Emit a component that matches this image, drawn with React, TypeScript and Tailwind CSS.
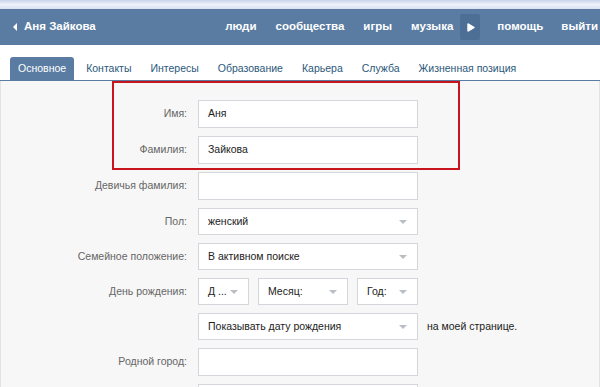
import { Play } from "lucide-react";

const nav = ["люди", "сообщества", "игры", "музыка"];
const tabs = ["Контакты", "Интересы", "Образование", "Карьера", "Служба", "Жизненная позиция"];

const Arrow = () => (
  <span className="shrink-0 w-0 h-0 border-l-[4px] border-r-[4px] border-t-[4px] border-l-transparent border-r-transparent border-t-[#b9bec4]"></span>
);

const Field = ({ value = "" }: { value?: string }) => (
  <div className="w-[220px] h-[28px] bg-white border border-[#d3d7dc] flex items-center px-[9px] text-[#222]">
    {value}
  </div>
);

const Select = ({ value, w = "w-[220px]" }: { value: string; w?: string }) => (
  <div className={`${w} h-[27px] bg-white border border-[#d3d7dc] flex items-center justify-between pl-[9px] pr-[10px] text-[#222] whitespace-nowrap`}>
    <span>{value}</span>
    <Arrow />
  </div>
);

const Row = ({ label, children }: { label: string; children: React.ReactNode }) => (
  <div className="flex items-center h-[28px]">
    <div className="w-[187px] text-right pr-[1px] text-[#666]">{label}</div>
    <div className="ml-[10px] flex items-center">{children}</div>
  </div>
);

const App = () => {
  return (
    <div className="w-[600px] h-[387px] overflow-hidden bg-white text-[10.5px]" style={{ fontFamily: '"Liberation Sans", Arial, sans-serif' }}>
      {/* browser-ish top strip */}
      <div className="h-[9px] bg-gradient-to-b from-[#c9d3ea] via-[#eef2fb] to-[#d9e0ef]"></div>

      {/* header */}
      <div className="h-[36px] bg-[#5a7ca2] flex items-center text-white font-bold text-[11.5px]">
        <span className="ml-[13px] w-0 h-0 border-t-[4px] border-b-[4px] border-r-[4px] border-t-transparent border-b-transparent border-r-white"></span>
        <span className="ml-[7px]">Аня Зайкова</span>
        <div className="ml-auto flex items-center">
          {nav.map((n, i) => (
            <span key={n} className={i === 0 ? "" : "ml-[19px]"}>{n}</span>
          ))}
          <span className="ml-[7px] w-[20px] h-[26px] bg-[#4d6f96] rounded-[2px] flex items-center justify-center">
            <Play className="w-[11px] h-[11px] fill-white" strokeWidth={0} />
          </span>
          <span className="ml-[17px]">помощь</span>
          <span className="ml-[18px] mr-[2px]">выйти</span>
        </div>
      </div>

      {/* tabs */}
      <div className="h-[36px] flex items-end px-[10px] border-b border-[#5a7ca2] text-[10.5px]">
        <div className="h-[23px] px-[8px] bg-[#5a7ca2] rounded-t-[3px] text-white flex items-center">Основное</div>
        {tabs.map((t, i) => (
          <div key={t} className={`h-[23px] flex items-center ${i === 0 ? "ml-[12px]" : "ml-[19px]"} text-[#2b587a]`}>{t}</div>
        ))}
      </div>

      {/* form */}
      <div className="relative bg-[#f7f7f7] border-l border-r border-[#e3e3e3] h-[306px] pt-[19px] flex flex-col gap-[8px]">
        <div className="absolute left-[111px] top-0 w-[348px] h-[89px] border-2 border-[#c8141c]"></div>
        <Row label="Имя:"><Field value="Аня" /></Row>
        <Row label="Фамилия:"><Field value="Зайкова" /></Row>
        <Row label="Девичья фамилия:"><Field /></Row>
        <Row label="Пол:"><Select value="женский" /></Row>
        <Row label="Семейное положение:"><Select value="В активном поиске" /></Row>
        <Row label="День рождения:">
          <div className="flex gap-[9px]">
            <Select value="Д ..." w="w-[51px]" />
            <Select value="Месяц:" w="w-[90px]" />
            <Select value="Год:" w="w-[61px]" />
          </div>
        </Row>
        <Row label="">
          <Select value="Показывать дату рождения" />
          <span className="ml-[9px] text-[#222]">на моей странице.</span>
        </Row>
        <Row label="Родной город:"><Field /></Row>
        <Row label=""><Field /></Row>
      </div>
    </div>
  );
};

export default App;
